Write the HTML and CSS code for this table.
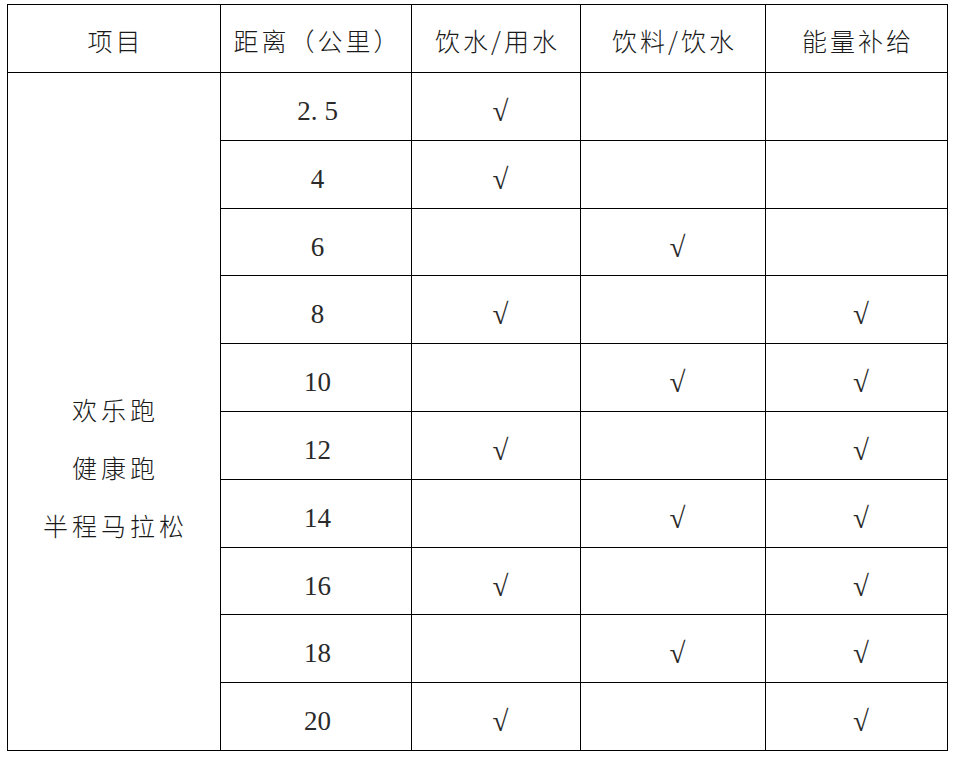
FILE: index.html
```html
<!DOCTYPE html>
<html lang="zh-CN">
<head>
<meta charset="utf-8">
<title>补给站</title>
<link rel="stylesheet" href="styles.css">
</head>
<body>
<table class="supply">
  <colgroup>
    <col class="c1"><col class="c2"><col class="c3"><col class="c4"><col class="c5">
  </colgroup>
  <thead>
    <tr class="head">
      <th class="cjk">项目</th>
      <th class="cjk">距离（公里）</th>
      <th class="cjk">饮水/用水</th>
      <th class="cjk">饮料/饮水</th>
      <th class="cjk">能量补给</th>
    </tr>
  </thead>
  <tbody>
    <tr>
      <td class="event" rowspan="10"><div class="event-list cjk"><span>欢乐跑</span><span>健康跑</span><span>半程马拉松</span></div></td>
      <td class="num">2<span class="dot">.</span>5</td><td class="chk">√</td><td></td><td></td>
    </tr>
    <tr><td class="num">4</td><td class="chk">√</td><td></td><td></td></tr>
    <tr class="short"><td class="num">6</td><td></td><td class="chk">√</td><td></td></tr>
    <tr><td class="num">8</td><td class="chk">√</td><td></td><td class="chk">√</td></tr>
    <tr><td class="num">10</td><td></td><td class="chk">√</td><td class="chk">√</td></tr>
    <tr><td class="num">12</td><td class="chk">√</td><td></td><td class="chk">√</td></tr>
    <tr><td class="num">14</td><td></td><td class="chk">√</td><td class="chk">√</td></tr>
    <tr class="short"><td class="num">16</td><td class="chk">√</td><td></td><td class="chk">√</td></tr>
    <tr><td class="num">18</td><td></td><td class="chk">√</td><td class="chk">√</td></tr>
    <tr><td class="num">20</td><td class="chk">√</td><td></td><td class="chk">√</td></tr>
  </tbody>
</table>
</body>
</html>
```
FILE: styles.css
```css
html, body {
  margin: 0;
  padding: 0;
  background: #fff;
}
body {
  padding: 4px 0 0 7px;
  font-family: "Noto Sans CJK SC", sans-serif;
  color: #000;
}
.supply {
  border-collapse: collapse;
  table-layout: fixed;
  width: 941px;
}
.c1 { width: 213px; }
.c2 { width: 191px; }
.c3 { width: 169px; }
.c4 { width: 185px; }
.c5 { width: 182px; }
.supply th,
.supply td {
  border: 1px solid #000;
  padding: 0;
  text-align: center;
  vertical-align: middle;
}
.supply tr { height: 68px; }
.supply tr.short { height: 67px; }
.cjk {
  font-family: "Noto Sans CJK SC", sans-serif;
  font-weight: 300;
  font-size: 25px;
  letter-spacing: 3px;
  color: #1a1a1a;
}
.supply th.cjk {
  font-weight: 300;
  padding: 2px 0 0 3px;
}
.num,
.chk {
  font-family: "Liberation Serif", "DejaVu Serif", serif;
  font-weight: 400;
  color: #2a2a2a;
}
.supply td.num {
  font-size: 27px;
  padding: 10px 0 0 3px;
}
.dot {
  margin-right: 7px;
}
.supply td.chk {
  font-size: 29px;
  padding: 10px 0 0 9px;
}
.supply td.event {
  padding: 0;
}
.event-list {
  display: flex;
  flex-direction: column;
  align-items: center;
  padding: 110px 0 0 3px;
  line-height: 58px;
  letter-spacing: 4px;
}
```
